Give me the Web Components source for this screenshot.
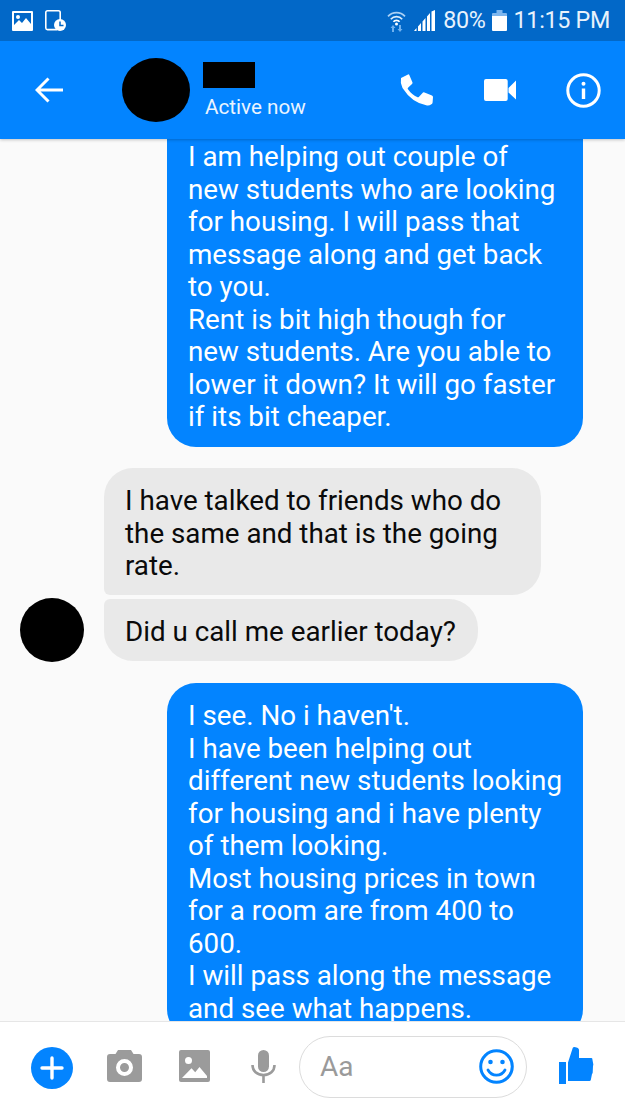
<!doctype html>
<html>
<head>
<meta charset="utf-8">
<style>
html, body { margin:0; padding:0; height:100%; }
body { font-family:Roboto, "Liberation Sans", sans-serif; background:#fafafa; overflow:hidden; }
</style>
</head>
<body>
<chat-screen>
    <status-bar slot="status"></status-bar>
    <chat-header slot="header"></chat-header>
    <msg-bubble mine first style="margin-top:-15px">I am helping out couple of<br>new students who are looking<br>for housing. I will pass that<br>message along and get back<br>to you.<br>Rent is bit high though for<br>new students. Are you able to<br>lower it down? It will go faster<br>if its bit cheaper.</msg-bubble>
    <msg-bubble top style="margin-top:21px">I have talked to friends who do<br>the same and that is the going<br>rate.</msg-bubble>
    <msg-bubble bottom avatar style="margin-top:3px">Did u call me earlier today?</msg-bubble>
    <msg-bubble mine style="margin-top:22px">I see. No i haven't.<br>I have been helping out<br>different new students looking<br>for housing and i have plenty<br>of them looking.<br>Most housing prices in town<br>for a room are from 400 to<br>600.<br>I will pass along the message<br>and see what happens.</msg-bubble>
    <chat-composer slot="composer"></chat-composer>
</chat-screen>

<script>
customElements.define('chat-screen', class extends HTMLElement {
    constructor() {
        super();
        this.attachShadow({mode: 'open'}).innerHTML = `
        <style>
        :host { display:flex; flex-direction:column; width:625px; height:1111px; overflow:hidden; background:#fafafa; }
        .top { flex:none; position:relative; z-index:2; box-shadow:0 1px 3px rgba(0,0,0,.22); }
        .list { flex:1; min-height:0; overflow:hidden; display:flex; flex-direction:column; }
        .bottom { flex:none; position:relative; z-index:2; }
        </style>
        <div class=top><slot name=status></slot><slot name=header></slot></div>
        <div class=list><slot></slot></div>
        <div class=bottom><slot name=composer></slot></div>`;
    }
});

customElements.define('status-bar', class extends HTMLElement {
    constructor() {
        super();
        this.attachShadow({mode: 'open'}).innerHTML = `
        <style>
        :host { display:flex; align-items:center; height:41px; background:#0268c8; color:#e8f2fc; padding:0 15px 0 12px; box-sizing:border-box; font:400 23.300px/41px Roboto, sans-serif; letter-spacing:-.3px; }
        svg { display:block; flex:none; }
        .sp { flex:1; }
        .pct { margin-left:8px; }
        .time { margin-left:7px; }
        </style>
        <svg width=21 height=20 viewBox="0 0 21 20"><path fill="#fff" fill-rule="evenodd" d="M1 0h19a1 1 0 0 1 1 1v18a1 1 0 0 1-1 1H1a1 1 0 0 1-1-1V1a1 1 0 0 1 1-1zm1 2v16h17V2z"/><path fill="#fff" d="M2 14l5-5 3 3 4-5 5 6v5H2z"/><circle cx="6" cy="6" r="2" fill="#fff"/></svg>
        <svg style="margin-left:12px" width=21 height=21 viewBox="0 0 21 21"><path fill="none" stroke="#fff" stroke-width="1.6" d="M12 19.600H2.500A1.700 1.700 0 0 1 .8 18V2.500A1.700 1.700 0 0 1 2.500.8h11a1.700 1.700 0 0 1 1.700 1.700V11"/><circle cx="15" cy="15" r="6" fill="#fff"/><path fill="none" stroke="#0268c8" stroke-width="1.500" d="M15 11.500V15.500H18.500"/></svg>
        <span class=sp></span>
        <svg width=19 height=22 viewBox="0 0 19 22"><g fill="none" stroke="#a9d0f5" stroke-width="1.700"><path d="M1 6.400a11.600 11.600 0 0 1 17 0"/><path d="M3.800 9.200a7.600 7.600 0 0 1 11.400 0" stroke="#dcecfb"/><path d="M6.400 11.800a4 4 0 0 1 6.200 0" stroke="#fff"/></g><circle cx="9.500" cy="14" r="1.500" fill="#fff"/><path fill="#6fb0ee" d="M6 15l2.500 3H7v4H5v-4H3.500zM13 22l-2.500-3H12v-4h2v4h1.500z"/></svg>
        <svg style="margin-left:8px" width=21 height=21 viewBox="0 0 21 21"><path fill="#fff" d="M0 21l2.500-3V21zM4 16.500l3-3.500V21H4zM8.500 11.500l3-3.500V21h-3zM13 6.500l3-3.500V21h-3zM17.500 1.500L21 0V21h-3.500z"/></svg>
        <span class=pct>80%</span>
        <svg style="margin-left:6px" width=15 height=21 viewBox="0 0 15 21"><path fill="#7db6ee" d="M4.500 0h6v3H14a1 1 0 0 1 1 1v4H0V4a1 1 0 0 1 1-1h3.500z"/><path fill="#fff" d="M0 6h15v14a1 1 0 0 1-1 1H1a1 1 0 0 1-1-1z"/></svg>
        <span class=time>11:15 PM</span>`;
    }
});

customElements.define('chat-header', class extends HTMLElement {
    constructor() {
        super();
        this.attachShadow({mode: 'open'}).innerHTML = `
        <style>
        :host { display:flex; align-items:center; height:98px; background:#0384ff; color:#fff; box-sizing:border-box; padding-left:35px; }
        svg { display:block; flex:none; }
        .av { flex:none; width:68px; height:64px; border-radius:50%; background:#000; margin-left:59px; }
        .who { margin-left:13px; width:197px; display:flex; flex-direction:column; align-items:flex-start; }
        .name { width:52px; height:26px; background:#000; }
        .act { margin:7px 0 0 2px; font:400 20.700px/24px Roboto, sans-serif; color:#eaf4ff; white-space:nowrap; }
        </style>
        <svg width=28 height=26 viewBox="0 0 28 26"><path fill="none" stroke="#fff" stroke-width="3" d="M13.500 1.500L2 13l11.500 11.500M2 13h26"/></svg>
        <div class=av></div>
        <div class=who><div class=name></div><div class=act>Active now</div></div>
        <svg width=33 height=32 viewBox="0 0 33 32"><path fill="#fff" d="M1 4L8 .4Q8.800 0 9.200 .8L12.500 8.500Q12.800 9.400 12 10L8 13.800Q7.500 14.300 7.800 15Q11.500 20.500 17.500 23.200Q18.300 23.500 18.800 23L23 18.600Q23.600 18 24.500 18.400L32 21.500Q33 22 33 23L32.600 28.500Q32.500 30 31 30.500Q29.500 31.800 27 31.500Q12 29 2.500 14Q0 9 1 4Z"/></svg>
        <svg style="margin-left:51px" width=32 height=22 viewBox="0 0 32 22"><path fill="#fff" d="M2 0h19.700a2 2 0 0 1 2 2v18a2 2 0 0 1-2 2H2a2 2 0 0 1-2-2V2a2 2 0 0 1 2-2zM24.500 9L32 1.500V20.500L24.500 13.500z"/></svg>
        <svg style="margin-left:50px" width=35 height=35 viewBox="0 0 35 35"><circle cx="17.500" cy="17.500" r="15.700" fill="none" stroke="#fff" stroke-width="3"/><circle cx="17.500" cy="10.800" r="2" fill="#fff"/><rect x="15.800" y="15.500" width="3.400" height="10.500" fill="#fff"/></svg>`;
    }
});

customElements.define('msg-bubble', class extends HTMLElement {
    constructor() {
        super();
        this.attachShadow({mode: 'open'}).innerHTML = `
        <style>
        :host { display:flex; flex:none; align-items:flex-end; padding-left:104px; font:400 27.780px/32.500px Roboto, sans-serif; color:#0a0a0a; white-space:nowrap; }
        :host([mine]) { justify-content:flex-end; padding:0 42px 0 0; color:#fff; }
        :host([avatar]) { padding-left:20px; }
        .pic { display:none; flex:none; width:64px; height:64px; border-radius:50%; background:#000; margin:0 20px -1px 0; }
        :host([avatar]) .pic { display:block; }
        .b { box-sizing:border-box; padding:17px 20.500px 12.500px 21px; background:#e9e9e9; border-radius:29px; }
        :host([top]) .b { border-bottom-left-radius:6px; width:437px; }
        :host([bottom]) .b { border-top-left-radius:6px; width:374px; }
        :host([mine]) .b { background:#0384ff; width:416px; }
        :host([first]) .b { border-top-left-radius:0; border-top-right-radius:0; padding-bottom:13.500px; }
        </style>
        <span class=pic></span>
        <div class=b><slot></slot></div>`;
    }
});

customElements.define('chat-composer', class extends HTMLElement {
    constructor() {
        super();
        this.attachShadow({mode: 'open'}).innerHTML = `
        <style>
        :host { display:flex; align-items:center; height:90px; background:#fff; border-top:1px solid #e6e6e6; box-sizing:border-box; padding-left:31px; }
        svg { display:block; flex:none; }
        .input { flex:none; box-sizing:border-box; width:228px; height:62px; margin-left:23px; border:1.500px solid #dcdcdc; border-radius:31px; display:flex; align-items:center; justify-content:space-between; padding:0 12px 0 20px; color:#9a9a9a; font:400 28px/32px Roboto, sans-serif; }
        </style>
        <svg style="margin-top:2px" width=42 height=42 viewBox="0 0 42 42"><circle cx="21" cy="21" r="21" fill="#0384ff"/><path stroke="#fff" stroke-width="3.400" stroke-linecap="round" d="M21 11v20M11 21h20"/></svg>
        <svg style="margin-left:34px;margin-top:-2px" width=35 height=32 viewBox="0 0 35 32"><path fill="#9b9b9b" fill-rule="evenodd" d="M11 0h13l2.500 4H32a3 3 0 0 1 3 3v22a3 3 0 0 1-3 3H3a3 3 0 0 1-3-3V7a3 3 0 0 1 3-3h5.500zM17.500 9a8.500 8.500 0 1 0 0 17 8.500 8.500 0 0 0 0-17zm0 4a4.500 4.500 0 1 1 0 9 4.500 4.500 0 0 1 0-9z"/></svg>
        <svg style="margin-left:37px;margin-top:-1px" width=31 height=32 viewBox="0 0 31 32"><path fill="#9b9b9b" fill-rule="evenodd" d="M2 0h27a2 2 0 0 1 2 2v28a2 2 0 0 1-2 2H2a2 2 0 0 1-2-2V2a2 2 0 0 1 2-2zM3 28h25v-2l-7.500-9-4.300 5.200-3.700-3.900zM9.500 7a3.500 3.500 0 1 0 0 7 3.500 3.500 0 0 0 0-7z"/></svg>
        <svg style="margin-left:41px" width=25 height=33 viewBox="0 0 25 33"><rect x="7" y="0" width="11" height="22" rx="5.500" fill="#9b9b9b"/><path fill="none" stroke="#9b9b9b" stroke-width="2.600" d="M1.500 15c0 6 4.500 10 11 10s11-4 11-10M12.500 25v8"/></svg>
        <div class=input>
            <span>Aa</span>
            <svg width=35 height=35 viewBox="0 0 35 35"><circle cx="17.500" cy="17.500" r="15.800" fill="none" stroke="#0384ff" stroke-width="3"/><circle cx="11.500" cy="13" r="2.300" fill="#0384ff"/><circle cx="23.500" cy="13" r="2.300" fill="#0384ff"/><path fill="none" stroke="#0384ff" stroke-width="2.800" stroke-linecap="round" d="M9 21c2 3.600 5 5.200 8.500 5.200S24 24.600 26 21"/></svg>
        </div>
        <svg style="margin-left:31px;margin-top:-2px" width=36 height=37 viewBox="0 0 36 37"><path fill="#0384ff" d="M1 15h7v22H1zM10 15.500L14.700 1Q15 0 16.500 0Q21 .5 21 3V11H33.500Q34.500 11 34.500 13L35.300 17.300Q35.500 18 35 19L34.700 25.700Q34.500 26.500 34 27L32.800 33Q32.500 34 31.500 34H10z"/></svg>`;
    }
});
</script>
</body>
</html>
